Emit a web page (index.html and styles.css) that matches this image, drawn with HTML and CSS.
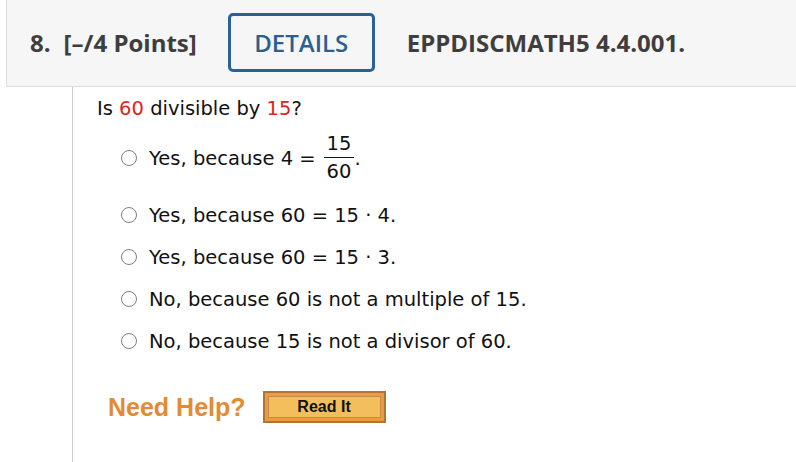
FILE: index.html
```html
<!DOCTYPE html>
<html>
<head>
<meta charset="utf-8">
<link rel="stylesheet" href="styles.css">
</head>
<body>
<div class="header">
  <span class="qnum">8.</span>
  <span class="points">[–/4 Points]</span>
  <span class="details">DETAILS</span>
  <span class="code">EPPDISCMATH5 4.4.001.</span>
</div>
<div class="question">
  <p class="prompt">Is <span class="red">60</span> divisible by <span class="red">15</span>?</p>
  <ul class="options">
    <li class="opt opt-frac"><span class="radio"></span><span>Yes, because 4 = </span><span class="frac"><span class="num">15</span><span class="den">60</span></span><span>.</span></li>
    <li class="opt"><span class="radio"></span><span>Yes, because 60 = 15 · 4.</span></li>
    <li class="opt"><span class="radio"></span><span>Yes, because 60 = 15 · 3.</span></li>
    <li class="opt"><span class="radio"></span><span>No, because 60 is not a multiple of 15.</span></li>
    <li class="opt"><span class="radio"></span><span>No, because 15 is not a divisor of 60.</span></li>
  </ul>
  <div class="help">
    <span class="need">Need Help?</span>
    <span class="readit"><span class="readit-inner">Read It</span></span>
  </div>
</div>
</body>
</html>
```
FILE: styles.css
```css
html, body {
  margin: 0;
  padding: 0;
  background: #fff;
}
body {
  width: 796px;
  height: 462px;
  overflow: hidden;
}
.header {
  margin-left: 6px;
  height: 87px;
  box-sizing: border-box;
  background: #f6f6f6;
  border-left: 1px solid #dcdcdc;
  border-bottom: 1px solid #dcdcdc;
  display: flex;
  align-items: center;
  padding-left: 23px;
  padding-bottom: 2px;
  font-family: "Open Sans", sans-serif;
  font-weight: 700;
  font-size: 24px;
  color: #3e3e3e;
}
.qnum {
  margin-right: 13px;
}
.points {
  margin-right: 31px;
}
.details {
  box-sizing: border-box;
  width: 147px;
  height: 59px;
  border: 3px solid #2c6196;
  border-radius: 5px;
  color: #2b5f92;
  font-weight: 600;
  display: flex;
  align-items: center;
  justify-content: center;
  margin-right: 32px;
}
.question {
  margin-left: 72px;
  border-left: 1px solid #cfcfcf;
  height: 375px;
  padding-left: 24px;
  font-family: "DejaVu Sans", Verdana, sans-serif;
  font-size: 19.5px;
  color: #111;
}
.prompt {
  margin: 0;
  padding-top: 10px;
  line-height: 24px;
}
.red {
  color: #e2231a;
}
.options {
  list-style: none;
  margin: 0;
  padding: 0 0 0 24px;
}
.opt {
  display: flex;
  align-items: center;
  height: 42px;
}
.opt-frac {
  margin-top: 8px;
  height: 58px;
  margin-bottom: 7px;
}
.radio {
  box-sizing: border-box;
  width: 16px;
  height: 16px;
  border: 1.5px solid #808080;
  border-radius: 50%;
  margin-right: 12px;
  flex: none;
}
.frac {
  display: inline-flex;
  flex-direction: column;
  align-items: center;
  margin-left: 8px;
  line-height: 20px;
}
.num {
  border-bottom: 1px solid #111;
  padding: 0 3px 3px;
}
.den {
  padding-top: 4px;
}
.help {
  display: flex;
  align-items: center;
  margin-top: 29px;
  padding-left: 11px;
}
.need {
  font-family: "Liberation Sans", Arial, sans-serif;
  font-weight: 700;
  font-size: 25px;
  color: #e38b34;
  margin-right: 17px;
}
.readit {
  box-sizing: border-box;
  width: 123px;
  height: 32px;
  border: 2px solid #ad7632;
  background: #eb9c3e;
  padding: 3px 3px;
  display: flex;
}
.readit-inner {
  flex: 1;
  border: 1px solid #c48c48;
  background: #f3bf5c;
  font-family: "Liberation Sans", Arial, sans-serif;
  font-weight: 700;
  font-size: 16px;
  color: #111;
  display: flex;
  align-items: center;
  justify-content: center;
}
```
